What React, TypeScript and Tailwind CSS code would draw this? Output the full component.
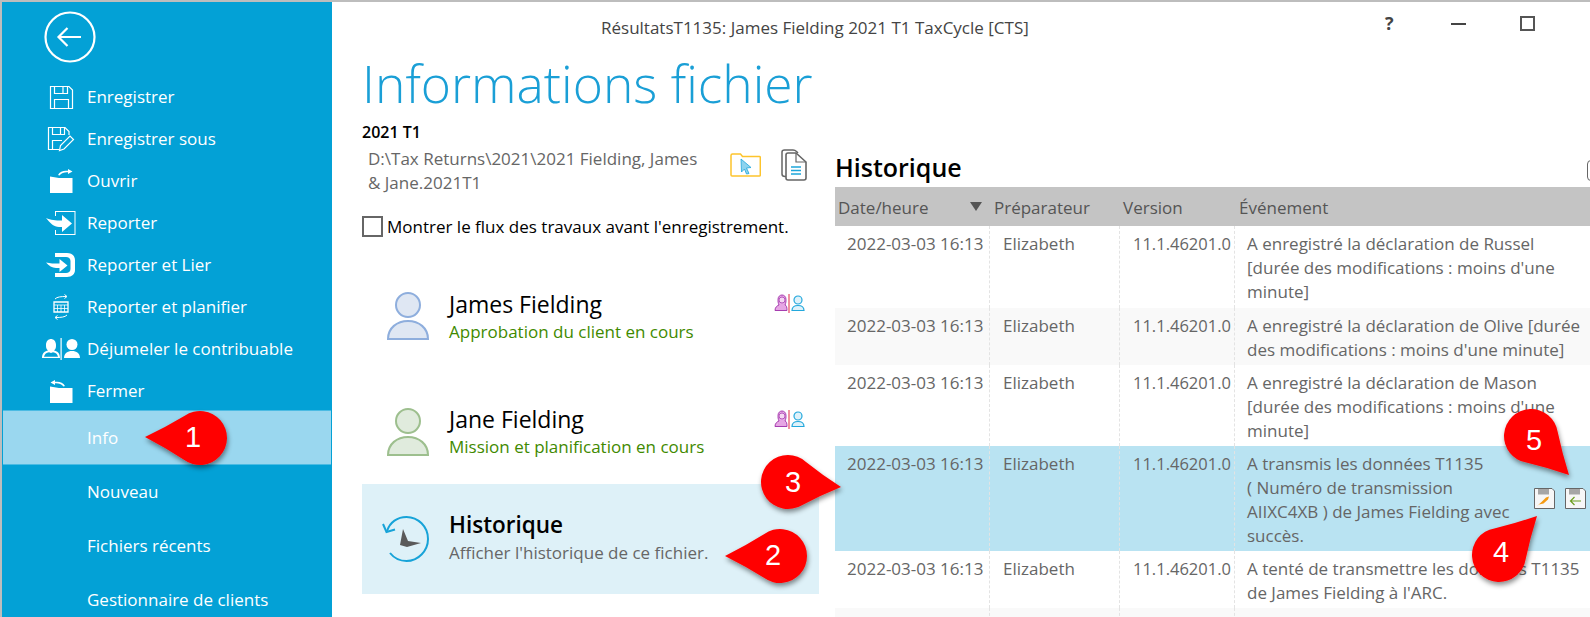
const teal = "#03a1d6";

function Floppy() {
  return (
    <svg width="26" height="26" viewBox="0 0 26 26" fill="none" stroke="white" strokeWidth="1.2">
      <path d="M2.5 2.500H21L24.500 6V24.500H2.500Z" />
      <path d="M6.500 2.500V9.500H19.500V2.500M15 3V9" />
      <path d="M6.500 24.500V15.500H20.500V24.500" />
    </svg>
  );
}

function FloppyPen() {
  return (
    <svg width="30" height="26" viewBox="0 0 30 26" fill="none" stroke="white" strokeWidth="1.2">
      <path d="M13 23.500H2.500V1.500H19L23 5.500V9" />
      <path d="M6.500 1.500V8.500H18.500V1.500M14.500 2V8" />
      <path d="M6.500 23V14.500H16" />
      <path d="M13.500 24.500L14.500 19.500L24 10L27.500 13.500L18 23Z" />
    </svg>
  );
}

function FolderOpen({ back }: { back?: boolean }) {
  return (
    <svg width="26" height="26" viewBox="0 0 26 26" fill="white">
      <path d="M2 8.500L11 10H24.500V25H2Z" />
      {back ? (
        <path d="M6 2L1.500 4.500L6 7V5.200C9 5 12.500 5.500 14.500 8.500L16 8C14 4 10 3.300 6 3.800Z" transform="translate(1 0)" />
      ) : (
        <path d="M20 1L24.500 3.500L20 6V4.200C17 4 13.500 4.500 11.500 7.500L10 7C12 3 16 2.300 20 2.800Z" />
      )}
    </svg>
  );
}

function ReportIcon() {
  return (
    <svg width="32" height="26" viewBox="0 0 32 26" fill="white">
      <path d="M10 1H30.500V25H10V20H11V24H29.500V2H11V6H10Z" />
      <path d="M17 5L27 13.500L17 22V17H14C9 17 5 13 1 8C6 10 10 10.500 17 10.500Z" />
    </svg>
  );
}

function ReportLinkIcon() {
  return (
    <svg width="32" height="26" viewBox="0 0 32 26" fill="white">
      <path d="M10 1H22C27 1 30 4 30 8V18C30 22 27 25 22 25H10V21H21C23.500 21 25.500 19.500 25.500 17V9C25.500 6.500 23.500 5 21 5H10Z" />
      <path d="M14.500 7L22.500 13.500L14.500 20V16H11C7 16 4 13.500 1 10.500C5 11.500 9 11.500 14.500 11.500Z" />
    </svg>
  );
}

function PlanIcon() {
  return (
    <svg width="18" height="26" viewBox="0 0 18 26" fill="none" stroke="white" strokeWidth="1">
      <path d="M3 5C5 2.800 9 2.500 14.500 2.500M12.500 0.500L15 2.500L12.500 4.500" />
      <path d="M2 8H16V18H2Z" strokeWidth="1.300" />
      <path d="M2 11H16M5.500 11V18M9 11V18M12.500 11V18M2 14.500H16" strokeWidth="0.800" />
      <path d="M15 21C13 23.200 9 23.500 3.500 23.500M5.500 21.500L3 23.500L5.500 25.500" />
    </svg>
  );
}

function TwinIcon() {
  return (
    <svg width="40" height="22" viewBox="0 0 40 22" fill="white">
      <path d="M1 20C1 15 4 13 7 12.500C5 11 5 9 5 7C5 3 7.500 1 10 1C12.500 1 15 3 15 7C15 9 15 11 13 12.500C16 13 19 15 19 20Z M3 18.800H17C16.500 16 14.500 14.500 12 14.300L10 15L8 14.300C5.500 14.500 3.500 16 3 18.800Z" fillRule="evenodd" />
      <circle cx="10" cy="7" r="4" fill="none" stroke="white" />
      <rect x="19.500" y="0" width="1.200" height="22" />
      <circle cx="31" cy="6.500" r="5.500" />
      <path d="M23 20C23 15.500 26.500 13 31 13C35.500 13 39 15.500 39 20Z" />
    </svg>
  );
}

function Person({ stroke, fill }: { stroke: string; fill: string }) {
  return (
    <svg width="42" height="48" viewBox="0 0 42 48">
      <circle cx="21" cy="13" r="12" fill={fill} stroke={stroke} strokeWidth="2" />
      <path d="M1 47C1 36 10 29 21 29C32 29 41 36 41 47Z" fill={fill} stroke={stroke} strokeWidth="2" />
    </svg>
  );
}

function TwinSmall() {
  return (
    <svg width="31" height="20" viewBox="0 0 31 20">
      <path d="M1 16.500C1 13 3.500 11.500 5 11C4 9 4 7 4 5.500C4 2.500 6 1 8 1C10 1 12 2.500 12 5.500C12 7 12 9 11 11C12.500 11.500 13 13 13 16.500Z" fill="#e6a6e4" stroke="#a63db0" strokeWidth="1" />
      <circle cx="8" cy="6" r="3" fill="#f5d8f2" stroke="#a63db0" strokeWidth="0.8" />
      <rect x="14.300" y="0" width="1.400" height="19" fill="#ea6478" />
      <circle cx="24" cy="6" r="4" fill="#dff2fa" stroke="#23a8dc" strokeWidth="1.200" />
      <path d="M18 16.500C18 13 20.500 11.500 24 11.500C27.500 11.500 30 13 30 16.500Z" fill="#dff2fa" stroke="#23a8dc" strokeWidth="1.200" />
    </svg>
  );
}

function Callouts() {
  const items = [
    { n: "1", tip: [145, 437], c: [200, 438], t: [193, 438] },
    { n: "2", tip: [725, 556], c: [780, 556], t: [773, 556] },
    { n: "3", tip: [841, 487], c: [788, 482], t: [793, 483] },
    { n: "4", tip: [1537, 516], c: [1499, 555], t: [1501, 553] },
    { n: "5", tip: [1569, 475], c: [1531, 436], t: [1534, 441] },
  ];
  const r = 27;
  return (
    <>
      <svg className="absolute left-0 top-0 pointer-events-none" width="1590" height="617">
        <defs>
          <filter id="sh" x="-30%" y="-30%" width="160%" height="160%">
            <feDropShadow dx="1" dy="3" stdDeviation="2.500" floodColor="#000" floodOpacity="0.45" />
          </filter>
        </defs>
        {items.map((i) => {
          const dx = i.tip[0] - i.c[0];
          const dy = i.tip[1] - i.c[1];
          const d = Math.hypot(dx, dy);
          const a = Math.atan2(dy, dx);
          const b = Math.acos(r / d) * 0.9;
          const p1 = [i.c[0] + r * Math.cos(a - b), i.c[1] + r * Math.sin(a - b)];
          const p2 = [i.c[0] + r * Math.cos(a + b), i.c[1] + r * Math.sin(a + b)];
          const q1 = [0.48 * i.tip[0] + 0.48 * p1[0] + 0.04 * i.c[0], 0.48 * i.tip[1] + 0.48 * p1[1] + 0.04 * i.c[1]];
          const q2 = [0.48 * i.tip[0] + 0.48 * p2[0] + 0.04 * i.c[0], 0.48 * i.tip[1] + 0.48 * p2[1] + 0.04 * i.c[1]];
          const path = `M${i.tip[0]} ${i.tip[1]}Q${q1[0]} ${q1[1]} ${p1[0]} ${p1[1]}A${r} ${r} 0 1 0 ${p2[0]} ${p2[1]}Q${q2[0]} ${q2[1]} ${i.tip[0]} ${i.tip[1]}Z`;
          return <path key={i.n} d={path} fill="#ff0000" filter="url(#sh)" />;
        })}
      </svg>
      {items.map((i) => (
        <span
          key={i.n}
          className="absolute w-[30px] h-[30px] -ml-[15px] -mt-[15px] flex items-center justify-center text-white text-[29px] font-['Liberation_Sans',sans-serif]"
          style={{ left: i.t[0], top: i.t[1] }}
        >
          {i.n}
        </span>
      ))}
    </>
  );
}

const menu = [
  { label: "Enregistrer", icon: <Floppy /> },
  { label: "Enregistrer sous", icon: <FloppyPen /> },
  { label: "Ouvrir", icon: <FolderOpen /> },
  { label: "Reporter", icon: <ReportIcon /> },
  { label: "Reporter et Lier", icon: <ReportLinkIcon /> },
  { label: "Reporter et planifier", icon: <PlanIcon /> },
  { label: "Déjumeler le contribuable", icon: <TwinIcon /> },
  { label: "Fermer", icon: <FolderOpen back /> },
];

const rows = [
  { h: "h-[82px]", bg: "", lines: ["A enregistré la déclaration de Russel", "[durée des modifications : moins d'une", "minute]"] },
  { h: "h-[57px]", bg: "bg-[#f9f9f9]", lines: ["A enregistré la déclaration de Olive [durée", "des modifications : moins d'une minute]"] },
  { h: "h-[81px]", bg: "", lines: ["A enregistré la déclaration de Mason", "[durée des modifications : moins d'une", "minute]"] },
  { h: "h-[105px]", bg: "bg-[#b9e3f2]", lines: ["A transmis les données T1135", "( Numéro de transmission", "AIIXC4XB ) de James Fielding avec", "succès."], actions: true },
  { h: "h-[57px]", bg: "", lines: ["A tenté de transmettre les données T1135", "de James Fielding à l'ARC."] },
  { h: "h-[57px]", bg: "bg-[#f9f9f9]", lines: [] as string[] },
];

export default function App() {
  return (
    <div className="relative w-[1590px] h-[617px] overflow-hidden bg-white border-t-2 border-l-2 border-[#bdbdbd] flex font-['Open_Sans',sans-serif] text-[17px]">
      <aside className="w-[330px] shrink-0 flex flex-col text-white" style={{ backgroundColor: teal }}>
        <div className="h-[74px] shrink-0 pl-[42px] pt-[9px]">
          <svg width="52" height="52" viewBox="0 0 52 52" fill="none" stroke="white" strokeWidth="2.200">
            <circle cx="26" cy="26" r="24.500" />
            <path d="M14.500 26H37M23.500 17L14.500 26L23.500 35" />
          </svg>
        </div>
        {menu.map((m) => (
          <div key={m.label} className="h-[42px] flex items-center shrink-0">
            <div className="w-[50px] ml-[34px] flex justify-center">{m.icon}</div>
            <span className="ml-[1px] whitespace-nowrap">{m.label}</span>
          </div>
        ))}
        <div className="h-[55px] shrink-0 -mt-[2px] mx-[1px] bg-[#9ad7ef] border-y border-[#4bbbe3] flex items-center pl-[84px]">
          Info
        </div>
        {["Nouveau", "Fichiers récents", "Gestionnaire de clients"].map((l) => (
          <div key={l} className="h-[54px] shrink-0 flex items-center pl-[85px]">
            {l}
          </div>
        ))}
      </aside>

      <main className="flex-1 min-w-0 flex flex-col">
        <header className="h-[43px] shrink-0 flex items-center text-[#444]">
          <div className="w-[269px] shrink-0" />
          <div className="w-[784px] shrink-0 mt-[9px] whitespace-nowrap">RésultatsT1135: James Fielding 2021 T1 TaxCycle [CTS]</div>
          <div className="w-[66px] shrink-0 font-bold text-[18px] -mt-[1px]">?</div>
          <div className="w-[15px] h-[2px] shrink-0 bg-[#444] mr-[54px]" />
          <div className="w-[15px] h-[15px] shrink-0 border-2 border-[#555]" />
        </header>
        <h1 className="h-[60px] mt-[8px] pl-[30px] text-[51.500px] font-light text-[#1a9fd6] leading-[60px] whitespace-nowrap shrink-0">Informations fichier</h1>
        <div className="flex flex-1 min-h-0">
          <section className="w-[503px] shrink-0 pl-[30px]">
            <div className="w-[457px]">
              <div className="pt-[7px] font-semibold text-[16px] text-black leading-[24px]">2021 T1</div>
              <div className="flex items-start mt-[3px] pl-[6px] h-[48px]">
                <p className="w-[350px] text-[#666] leading-[24px]">
                  D:\Tax Returns\2021\2021 Fielding, James<br />&amp; Jane.2021T1
                </p>
                <svg className="ml-[12px] mt-[6px]" width="31" height="24" viewBox="0 0 31 24" fill="none">
                  <path d="M1 2.500C1 1.500 1.500 1 2.500 1H10.500L12.500 3.500H29.500C30 3.500 30.300 4 30.300 4.500V22C30.300 22.500 30 23 29.500 23H2C1.500 23 1 22.500 1 22Z" stroke="#fdc42c" strokeWidth="1.500" />
                  <path d="M11 6L21 14.500L16.500 15L19 20.500L16.500 21L14.500 16L11.500 19Z" fill="#8ed3ee" stroke="#1ea6da" strokeWidth="0.800" />
                </svg>
                <svg className="ml-[20px] mt-[2px]" width="26" height="32" viewBox="0 0 26 32" fill="none">
                  <path d="M5 27.500H4C2.500 27.500 1 26.500 1 25V3C1 2 2 1 3.500 1H12C13.500 1 14.500 1.500 15.500 2.500L17 4" stroke="#666" strokeWidth="1.500" />
                  <path d="M5 6C5 5 6 4 7 4H15L25 13V29C25 30 24 31 23 31H7C6 31 5 30 5 29Z" stroke="#666" strokeWidth="1.600" fill="white" />
                  <path d="M15 4V13H25" stroke="#666" strokeWidth="1.200" />
                  <path d="M10 18H20M10 21.500H20M10 25H20" stroke="#1ea6da" strokeWidth="1.500" />
                </svg>
              </div>
              <label className="flex items-center mt-[19px] text-black whitespace-nowrap">
                <span className="w-[21px] h-[21px] border-2 border-[#666] mr-[4px] shrink-0" />
                <span>Montrer le flux des travaux avant l'enregistrement.</span>
              </label>
              <div className="mt-[44px] h-[64px] flex pl-[25px] pr-[14px] items-center">
                <Person stroke="#8eaedd" fill="#dfe7f3" />
                <div className="ml-[20px] flex-1 pt-[3px]">
                  <div className="text-[23px] leading-[28px] text-black">James Fielding</div>
                  <div className="text-[#3f8a00] leading-[27px]">Approbation du client en cours</div>
                </div>
                <div className="self-start mt-[10px]"><TwinSmall /></div>
              </div>
              <div className="mt-[52px] h-[64px] flex pl-[25px] pr-[14px] items-center">
                <Person stroke="#9dbf8e" fill="#e0ebdd" />
                <div className="ml-[20px] flex-1 pt-[1px]">
                  <div className="text-[23px] leading-[28px] text-black">Jane Fielding</div>
                  <div className="text-[#3f8a00] leading-[27px]">Mission et planification en cours</div>
                </div>
                <div className="self-start mt-[10px]"><TwinSmall /></div>
              </div>
              <div className="mt-[20px] h-[110px] bg-[#def1f8] flex items-center pl-[20px]">
                <svg width="50" height="50" viewBox="0 0 50 50" fill="none">
                  <path d="M5 17C8 8 15.500 3 24.500 3C36 3 46 12.500 46 25C46 37 36 47 24.500 47C18 47 12 44 8 39" stroke="#17a3d8" strokeWidth="2" />
                  <path d="M1 10L4.500 18L13 15.500" stroke="#17a3d8" strokeWidth="2" />
                  <path d="M21 15L26 27L39 29L25 33L18 31Z" fill="#5a5a5a" />
                </svg>
                <div className="ml-[17px]">
                  <div className="text-[22.500px] font-semibold leading-[28px] text-black">Historique</div>
                  <div className="text-[#666] leading-[28px]">Afficher l'historique de ce fichier.</div>
                </div>
              </div>
            </div>
          </section>

          <section className="flex-1 min-w-0 flex flex-col relative">
            <div className="h-[74px] shrink-0 flex items-end pb-[3px] text-[25px] leading-[34px] font-semibold text-black">
              <span>Historique</span>
            </div>
            <span className="absolute left-[752px] top-[47px] w-[14px] h-[21px] border border-[#666] rounded-sm" />
            <div className="h-[39px] shrink-0 pt-[3px] bg-[#c4c4c4] grid grid-cols-[155px_130px_115px_1fr] text-[#555] items-center">
              <div className="pl-[3px] flex items-center justify-between pr-[8px]">
                Date/heure
                <svg className="-mt-[3px]" width="12" height="9" viewBox="0 0 12 9"><path d="M0 0H12L6 9Z" fill="#555" /></svg>
              </div>
              <div className="pl-[4px]">Préparateur</div>
              <div className="pl-[3px]">Version</div>
              <div className="pl-[4px]">Événement</div>
            </div>
            {rows.map((r, i) => (
              <div key={i} className={`${r.h} ${r.bg} shrink-0 grid grid-cols-[155px_130px_115px_1fr] text-[#666] leading-[24px]`}>
                {r.lines.length > 0 ? (
                  <>
                    <div className="pl-[12px] pt-[6px] border-r border-dashed border-[#e3e3e3] whitespace-nowrap">2022-03-03 16:13</div>
                    <div className="pl-[13px] pt-[6px] border-r border-dashed border-[#e3e3e3]">Elizabeth</div>
                    <div className="pl-[13px] pt-[6px] border-r border-dashed border-[#e3e3e3] whitespace-nowrap text-[16.500px]">11.1.46201.0</div>
                    <div className="pl-[12px] pt-[6px] relative whitespace-nowrap">
                      {r.lines.map((l) => (
                        <div key={l}>{l}</div>
                      ))}
                      {r.actions && (
                        <div className="absolute right-[4px] top-[42px] flex gap-[10px]">
                          <svg width="21" height="21" viewBox="0 0 21 21" fill="none">
                            <path d="M0.500 0.500H18L20.500 3V20.500H0.500Z" fill="#f7f7f7" stroke="#666" />
                            <path d="M4 1H15V6.500H4Z" fill="#a6a6a6" />
                            <path d="M3 18L7.500 14L12 9.500L15 8.500L14 11.500L9.500 15.500L5 16.500Z" fill="#f59a12" />
                          </svg>
                          <svg width="21" height="21" viewBox="0 0 21 21" fill="none">
                            <path d="M0.500 0.500H18L20.500 3V20.500H0.500Z" fill="#f7f7f7" stroke="#666" />
                            <path d="M4 1H15V6.500H4Z" fill="#a6a6a6" />
                            <path d="M16 13H6M9.500 9L5.500 13L9.500 17" stroke="#6b9e1f" strokeWidth="1.200" />
                          </svg>
                        </div>
                      )}
                    </div>
                  </>
                ) : (
                  <>
                    <div className="border-r border-dashed border-[#e3e3e3]" />
                    <div className="border-r border-dashed border-[#e3e3e3]" />
                    <div className="border-r border-dashed border-[#e3e3e3]" />
                  </>
                )}
              </div>
            ))}
          </section>
        </div>
      </main>
      <div className="absolute -left-[2px] -top-[2px] w-[1590px] h-[617px]">
        <Callouts />
      </div>
    </div>
  );
}
